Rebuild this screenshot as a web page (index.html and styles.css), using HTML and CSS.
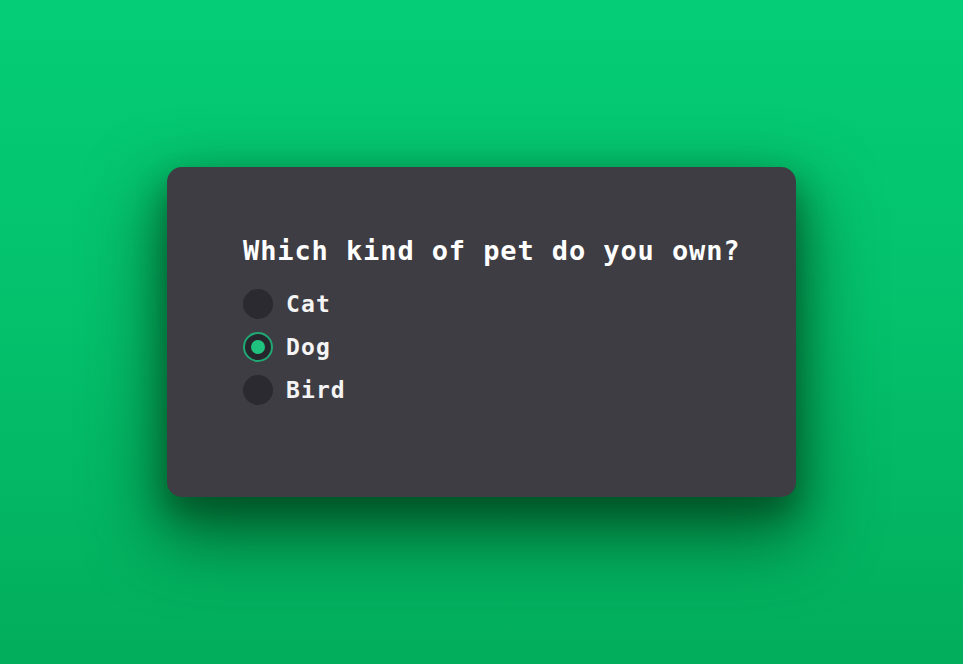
FILE: index.html
```html
<!DOCTYPE html>
<html lang="en">
<head>
<meta charset="utf-8">
<title>Pet survey</title>
<link rel="stylesheet" href="styles.css">
</head>
<body>
<main class="stage">
  <form class="card">
    <h2 class="question">Which kind of pet do you own?</h2>
    <div class="options">
      <label class="option"><span class="radio"></span><span class="label">Cat</span></label>
      <label class="option"><span class="radio checked"></span><span class="label">Dog</span></label>
      <label class="option"><span class="radio"></span><span class="label">Bird</span></label>
    </div>
  </form>
</main>
</body>
</html>
```

FILE: styles.css
```css
html, body {
  margin: 0;
  padding: 0;
  height: 100%;
}
body {
  background: linear-gradient(180deg, #05cd77 0%, #04c06b 50%, #02ad5b 100%);
  font-family: "DejaVu Sans Mono", "Liberation Mono", monospace;
  color: #f4f4f5;
}
.stage {
  height: 100vh;
  display: flex;
  align-items: center;
  justify-content: center;
}
.card {
  box-sizing: border-box;
  width: 629px;
  height: 330px;
  background: #3e3d43;
  border-radius: 15px;
  padding: 67px 40px 66px 76px;
  box-shadow: 0 32px 70px 10px rgba(0, 60, 25, 0.65), 0 16px 30px rgba(0, 50, 20, 0.45);
}
.question {
  margin: 0;
  font-size: 27px;
  letter-spacing: 0.9px;
  line-height: 34px;
  font-weight: 700;
  color: #ffffff;
  white-space: nowrap;
}
.options {
  margin-top: 21px;
  display: flex;
  flex-direction: column;
  gap: 13px;
}
.option {
  display: flex;
  align-items: center;
  gap: 13px;
  height: 30px;
}
.radio {
  box-sizing: border-box;
  width: 30px;
  height: 30px;
  border-radius: 50%;
  background: #2b2a30;
  border: 2px solid transparent;
  display: flex;
  align-items: center;
  justify-content: center;
  flex: none;
}
.radio.checked {
  border-color: #1fa874;
  background: #27262c;
}
.radio.checked::after {
  content: "";
  width: 14px;
  height: 14px;
  border-radius: 50%;
  background: #1fc27e;
}
.label {
  font-size: 23px;
  letter-spacing: 1.1px;
  font-weight: 700;
  line-height: 30px;
  color: #f4f4f5;
}
```
